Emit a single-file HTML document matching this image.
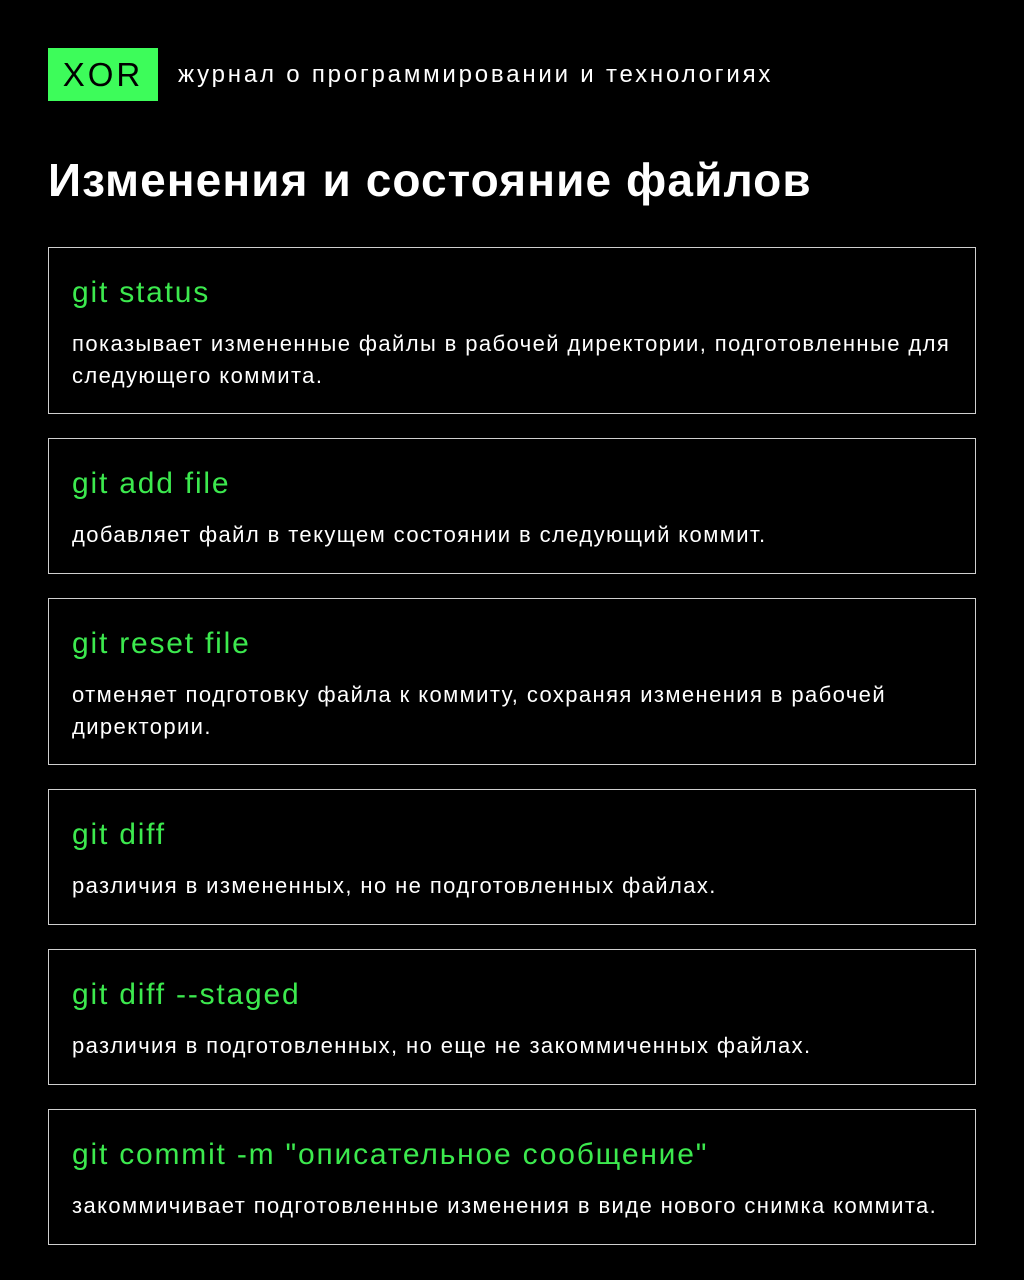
<!DOCTYPE html>
<html><head><meta charset="utf-8"><style>
body{margin:0;width:1024px;height:1280px;background:#000;font-family:"Liberation Sans","DejaVu Sans",sans-serif;position:relative;overflow:hidden}
.logo{position:absolute;left:48px;top:48px;width:110px;height:53px;background:#3dfc5a;color:#000;font-size:33px;line-height:53px;text-align:center;letter-spacing:3px}
.sub{position:absolute;left:178px;top:58px;color:#fff;font-size:24px;line-height:34px;letter-spacing:2.8px;white-space:nowrap}
h1{position:absolute;left:48px;top:150px;margin:0;color:#fff;font-size:46px;line-height:60px;font-weight:bold;letter-spacing:1.1px;white-space:nowrap}
.card{position:absolute;left:48px;width:928px;border:1px solid #cfcfcf;box-sizing:border-box}
.card .t{position:absolute;left:23px;top:25px;color:#3ce94e;font-size:30px;line-height:40px;letter-spacing:1.8px;white-space:nowrap}
.card .d{position:absolute;left:23px;top:80px;right:10px;color:#fff;font-size:22px;line-height:32px;letter-spacing:1.4px}
</style></head><body>
<div class="logo">XOR</div>
<div class="sub">журнал о программировании и технологиях</div>
<h1>Изменения и состояние файлов</h1>
<div class="card" style="top:247px;height:167px"><div class="t">git status</div><div class="d">показывает измененные файлы в рабочей директории, подготовленные для следующего коммита.</div></div>
<div class="card" style="top:438px;height:136px"><div class="t">git add file</div><div class="d">добавляет файл в текущем состоянии в следующий коммит.</div></div>
<div class="card" style="top:598px;height:167px"><div class="t">git reset file</div><div class="d">отменяет подготовку файла к коммиту, сохраняя изменения в рабочей директории.</div></div>
<div class="card" style="top:789px;height:136px"><div class="t">git diff</div><div class="d">различия в измененных, но не подготовленных файлах.</div></div>
<div class="card" style="top:949px;height:136px"><div class="t">git diff --staged</div><div class="d">различия в подготовленных, но еще не закоммиченных файлах.</div></div>
<div class="card" style="top:1109px;height:136px"><div class="t">git commit -m "описательное сообщение"</div><div class="d" style="white-space:nowrap">закоммичивает подготовленные изменения в виде нового снимка коммита.</div></div>
</body></html>
